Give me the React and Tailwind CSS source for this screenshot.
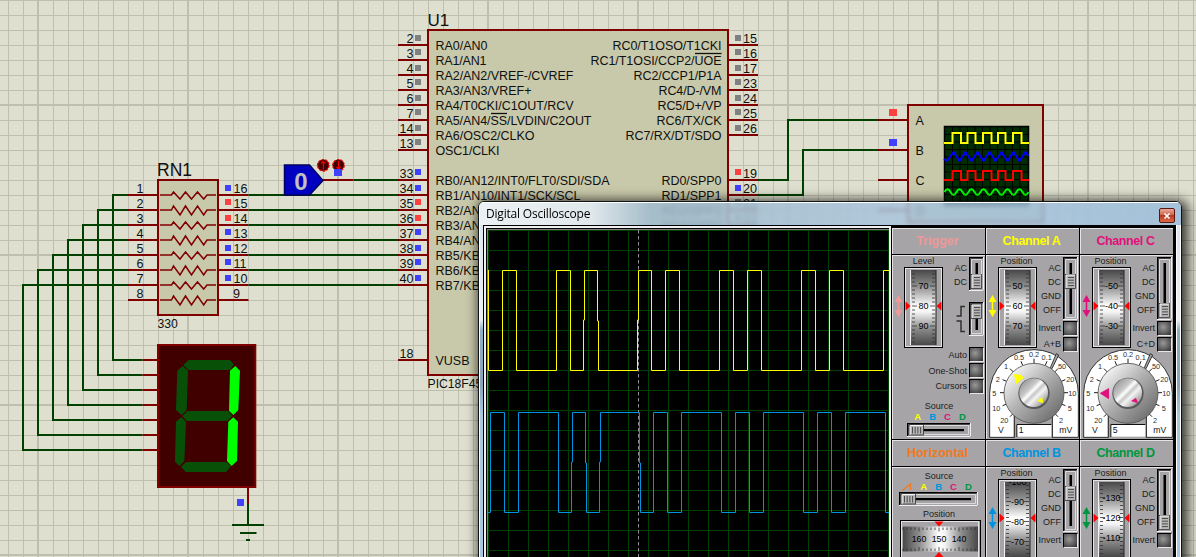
import React from "react";

const WIRE = "#004000";
const PIN = "#800000";
const SQUARE = { g: "#808080", b: "#4040ff", r: "#ff4040" };

const range = (n) => Array.from({ length: n }, (_, i) => i);

function Line({ d, color = WIRE, w = 2 }) {
  return <path d={d} stroke={color} strokeWidth={w} fill="none" />;
}

function Label({ x, y, children, size = 12.5, anchor = "start", len }) {
  return (
    <text
      x={x}
      y={y}
      fontSize={size}
      textAnchor={anchor}
      textLength={len}
      fill="#101010"
    >
      {children}
    </text>
  );
}

function SchematicGrid() {
  return (
    <g shapeRendering="crispEdges" fill="#bfbfaf">
      {range(80).map((i) => (
        <rect
          key={"v" + i}
          x={8 + 15 * i - (i % 10 === 2 ? 1 : 0)}
          y="0"
          width={i % 10 === 2 ? 2 : 1}
          height="557"
        />
      ))}
      {range(38).map((i) => (
        <rect
          key={"h" + i}
          x="0"
          y={15 * i - (i % 10 === 7 ? 1 : 0)}
          width="1196"
          height={i % 10 === 7 ? 2 : 1}
        />
      ))}
    </g>
  );
}

/* number, y, square colour, label, label width */
const LEFT_PINS = [
  ["2", 45, "g", "RA0/AN0", 52],
  ["3", 60, "g", "RA1/AN1", 51],
  ["4", 75, "g", "RA2/AN2/VREF-/CVREF", 138],
  ["5", 90, "g", "RA3/AN3/VREF+", 96],
  ["6", 105, "g", "RA4/T0CKI/C1OUT/RCV", 138],
  ["7", 120, "g", "RA5/AN4/SS/LVDIN/C2OUT", 156],
  ["14", 135, "g", "RA6/OSC2/CLKO", 99],
  ["13", 150, "g", "OSC1/CLKI", 64],
  ["33", 180, "b", "RB0/AN12/INT0/FLT0/SDI/SDA", 174],
  ["34", 195, "b", "RB1/AN10/INT1/SCK/SCL", 145],
  ["35", 210, "r", "RB2/AN"],
  ["36", 225, "r", "RB3/AN"],
  ["37", 240, "b", "RB4/AN"],
  ["38", 255, "b", "RB5/KB"],
  ["39", 270, "b", "RB6/KB"],
  ["40", 285, "b", "RB7/KB"],
  ["18", 360, null, "VUSB", 34],
];

const RIGHT_PINS = [
  ["15", 45, "g", "RC0/T1OSO/T1CKI", 109],
  ["16", 60, "g", "RC1/T1OSI/CCP2/UOE", 131],
  ["17", 75, "g", "RC2/CCP1/P1A", 88],
  ["23", 90, "g", "RC4/D-/VM", 63],
  ["24", 105, "g", "RC5/D+/VP", 64],
  ["25", 120, "g", "RC6/TX/CK", 65],
  ["26", 135, "g", "RC7/RX/DT/SDO", 96],
  ["19", 180, "r", "RD0/SPP0", 60],
  ["20", 195, "b", "RD1/SPP1", 60],
  ["21", 210, "g", "RD2/SPP2", 60],
  ["22", 225, "g", "RD3/SPP3", 60],
];

const squareY = (y) => y - ((y / 15) % 2 ? 10 : 11);

function Chip() {
  return (
    <g>
      <rect x="428" y="30" width="300" height="345" fill="#c8c8aa" stroke={PIN} strokeWidth="2" />
      <Label x={427.5} y={26} size={17}>U1</Label>
      <Label x={427.5} y={388} size={12.2}>PIC18F4550</Label>
      {LEFT_PINS.map(([n, y, sq, label, len]) => (
        <g key={n}>
          <Line d={`M398 ${y}H428`} color={PIN} />
          <Label x={413.5} y={y - 2} anchor="end" size={12.6}>{n}</Label>
          {sq && <rect x="415" y={squareY(y)} width="6" height="6" fill={SQUARE[sq]} />}
          <Label x={435.5} y={y + 5} len={len}>{label}</Label>
        </g>
      ))}
      {RIGHT_PINS.map(([n, y, sq, label, len]) => (
        <g key={n}>
          <Line d={`M728 ${y}H758`} color={PIN} />
          <Label x={743} y={y - 2} size={12.6}>{n}</Label>
          <rect x="735" y={squareY(y)} width="6" height="6" fill={SQUARE[sq]} />
          <Label x={721.5} y={y + 5} anchor="end" len={len}>{label}</Label>
        </g>
      ))}
      <Line d="M491 113.5H507" color="#101010" w={1.3} />
      <Line d="M695 53.5H721.5" color="#101010" w={1.3} />
    </g>
  );
}

const RN_COLORS = ["b", "r", "r", "b", "b", "b", "b"];

function ResistorPack() {
  return (
    <g>
      <rect x="158" y="180" width="60" height="135" fill="#c8c8aa" stroke={PIN} strokeWidth="2" />
      <Label x={157} y={176} size={17.5}>RN1</Label>
      <Label x={157.5} y={328} size={12.2}>330</Label>
      {range(8).map((i) => {
        const y = 195 + 15 * i;
        const a = i % 2 ? 4 : 3;
        return (
          <g key={i}>
            <Line d={`M128 ${y}H158M218 ${y}H248.500`} color={PIN} />
            <Line
              d={`M160 ${y}H171.500L173.500 ${y - a}L180 ${y + a + 1}L185.500 ${y - a}L191.500 ${y + a + 1}L197.500 ${y - a}L203.700 ${y + a + 1}L207 ${y}H216`}
              color={PIN}
              w={1.5}
            />
            <Label x={140} y={y - 2} anchor="middle" size={12.6}>{i + 1}</Label>
            <Label x={i === 7 ? 233 : 233.5} y={y - 2} size={12.6}>{16 - i}</Label>
            {i < 7 && (
              <>
                <rect x="225" y={squareY(y)} width="6" height="6" fill={SQUARE[RN_COLORS[i]]} />
                <Line d={`M128 ${y}H${113 - 15 * i}V${360 + 15 * i}H142.500`} />
                <Line d={`M142.500 ${360 + 15 * i}H158`} color={PIN} />
                <Line d={`M248.500 ${y}H398`} />
              </>
            )}
          </g>
        );
      })}
    </g>
  );
}

const SEGMENTS = [
  [0, "160,105 176,90 300,90 312,103 300,120 175,120"],
  [0, "158,108 174,122 170,240 155,255 138,240 142,122"],
  [0, "157,258 172,243 295,243 307,258 292,273 170,273"],
  [0, "154,262 168,275 163,393 148,408 135,395 138,275"],
  [0, "153,410 168,396 290,396 303,409 288,426 167,426"],
  [1, "316,108 330,122 325,240 310,255 297,242 300,122"],
  [1, "310,262 324,275 321,393 305,408 291,393 295,275"],
];

function SevenSegment() {
  return (
    <g>
      <rect x="158" y="345" width="97.300" height="142" fill="#400000" stroke={PIN} strokeWidth="2" />
      <g transform="translate(130 330) scale(0.3333)">
        {SEGMENTS.map(([on, p]) => (
          <polygon key={p} points={p} fill={on ? "#00ff00" : "#085008"} />
        ))}
      </g>
      <Line d="M248 488V504" color={PIN} />
      <Line d="M248 504V525M232 525H264M240 533H256.500M246 540H250" />
      <rect x="237" y="499" width="7" height="7" fill={SQUARE.b} />
    </g>
  );
}

function LogicState() {
  return (
    <g>
      <Line d="M323 180H353.500" color={PIN} />
      <Line d="M353.500 180H398" />
      <polygon points="284.500,165 309.500,165 323,180.500 309.500,195 284.500,195" fill="#0000c0" stroke="#000060" strokeWidth="1.5" />
      <text x="301" y="190" fontSize="24" fontWeight="bold" textAnchor="middle" fill="#c0c0c0">0</text>
      {[323.3, 338.5].map((x, i) => (
        <g key={x}>
          <circle cx={x} cy="165.300" r="5.700" fill="#400000" stroke="#e00000" strokeWidth="1.300" strokeDasharray="2.500 1" />
          <path
            d={i ? `M${x} 161V169M${x - 2} 167L${x} 169L${x + 2} 167` : `M${x} 169.500V162.500M${x - 2.2} 163.500L${x} 161.500L${x + 2.2} 163.500`}
            stroke="#ff0000"
            strokeWidth="1.100"
            fill="none"
          />
        </g>
      ))}
      <rect x="334" y="169" width="8" height="7" fill={SQUARE.b} />
    </g>
  );
}

const squareWave = (hi, lo) =>
  `M944 ${lo}H952.500V${hi}H961V${lo}H967.500V${hi}H975.500V${lo}H983V${hi}H991.500V${lo}H998V${hi}H1005.500V${lo}H1013V${hi}H1021.500V${lo}H1029`;

function ScopeSymbol() {
  return (
    <g>
      <Line d="M758 180H788V120H878M758 195H803V150H878" />
      <Line d="M878 120H908M878 150H908M878 180H908M878 210H908" color={PIN} />
      <rect x="889" y="109" width="8" height="7" fill={SQUARE.r} />
      <rect x="889" y="139" width="8" height="7" fill={SQUARE.b} />
      <rect x="908" y="105" width="135" height="117" fill="#c8c8aa" stroke={PIN} strokeWidth="2" />
      {["A", "B", "C", "D"].map((c, i) => (
        <Label key={c} x={915.5} y={125 + 30 * i} size={12.5}>{c}</Label>
      ))}
      <rect x="944.500" y="126.500" width="84" height="79" fill="#002c00" stroke="#000" strokeWidth="1.500" />
      <path
        d={range(10).map((i) => `M${952.5 + 7.5 * i} 127V205`).join("") + range(10).map((i) => `M945 ${134.5 + 7.5 * i}H1028`).join("")}
        stroke="#000"
        strokeWidth="1"
      />
      <g fill="none" strokeWidth="2">
        <path d={squareWave(133, 143)} stroke="#ffff00" />
        <path
          d={"M944 159L947 161" + range(7).map((i) => `L${953.5 + 12 * i} 152${i < 6 ? `L${959.5 + 12 * i} 161` : ""}`).join("") + "L1028.500 156"}
          stroke="#0000ff"
        />
        <path d={squareWave(171, 180)} stroke="#ff0000" />
        <path
          d={"M944.500 192" + range(7).map(() => `q3 -5.500 6 0q3 6 6 0`).join("")}
          stroke="#00ff00"
        />
      </g>
    </g>
  );
}

function Schematic() {
  return (
    <svg width="1196" height="557" className="block" fontFamily="'Liberation Sans', Arial, sans-serif">
      <rect width="1196" height="557" fill="#dfdfcf" />
      <SchematicGrid />
      <ResistorPack />
      <SevenSegment />
      <Chip />
      <LogicState />
      <ScopeSymbol />
    </svg>
  );
}

/* ---------- oscilloscope window ---------- */

function Traces() {
  const yellow =
    "M488.500 270V370.500H502.500V270.500H516.500V370.500H556.500V270.500H570.500V370.500H583.500V320H584.500V270.500H597.500V321H598.500V370.500H637.500V320H638.500V270.500H651.500V370.500H665.500V270.500H679.500V370.500H719.500V270.500H733.500V370.500H747.500V270.500H761.500V370.500H801.500V270.500H815.500V370.500H829.500V270.500H843.500V370.500H883.500V270.500H889";
  const blue =
    "M488 512.500H490.500V412.500H504.500V512.500H518.500V412.500H558.500V512.500H571.500V462H572.500V412.500H585.500V463H586.500V512.500H599.500V462H600.500V412.500H639.500V463H640.500V512.500H653.500V412.500H667.500V512.500H681.500V412.500H721.500V512.500H735.500V412.500H749.500V512.500H763.500V412.500H803.500V512.500H817.500V412.500H831.500V512.500H845.500V412.500H885.500V512.500H889";
  return (
    <svg width="401" height="327" viewBox="488 230 401 327" className="block bg-black" fill="none">
      <path
        d={range(21).map((i) => `M${488.5 + 20 * i} 230V557`).join("") + range(17).map((i) => `M488 ${230.5 + 20 * i}H889`).join("")}
        stroke="#004000"
      />
      <path d="M638.500 230V557" stroke="#909090" strokeDasharray="3.500 2.500" />
      <path d={blue} stroke="#0094e0" />
      <path d={yellow} stroke="#ffff00" />
    </svg>
  );
}

function Bevel({ w, h, children }) {
  return (
    <svg width={w} height={h} className="block shrink-0">
      <rect x="0.500" y="0.500" width={w - 1} height={h - 1} fill="#a6a4a6" stroke="#000" />
      <path d={`M1.500 ${h - 1.5}V1.500H${w - 1.5}`} stroke="#000" fill="none" strokeWidth="0.600" />
      <path d={`M2.500 2.500H${w - 2.5}V${h - 2.5}H2.500Z`} stroke="#dcdcdc" fill="none" />
      <path d={`M0 ${h - 0.5}H${w - 0.5}V0`} stroke="#f0f0f0" fill="none" />
      {children}
    </svg>
  );
}

function VSwitch({ h, at }) {
  return (
    <Bevel w={15} h={h}>
      <rect x="6.500" y="6" width="2.500" height={h - 12} fill="#000" />
      <rect x="2.500" y={at + 0.5} width="10" height="14" fill="#b8b8b8" stroke="#303030" strokeWidth="0.800" />
      <path d={`M3 ${at + 14}V${at + 1}H12`} stroke="#f4f4f4" fill="none" />
      {range(4).map((i) => (
        <path key={i} d={`M5 ${at + 3.5 + 2.7 * i}H11`} stroke="#404040" strokeWidth="0.900" />
      ))}
    </Bevel>
  );
}

function HSwitch({ w }) {
  return (
    <Bevel w={w} h={14}>
      <rect x="16" y="6" width={w - 23} height="2.200" fill="#000" />
      <rect x="2.500" y="2" width="14" height="10" fill="#b8b8b8" stroke="#303030" strokeWidth="0.800" />
      <path d="M3 12V2.500H16" stroke="#f4f4f4" fill="none" />
      {range(4).map((i) => (
        <path key={i} d={`M${5.5 + 2.7 * i} 4V10.500`} stroke="#404040" strokeWidth="0.900" />
      ))}
    </Bevel>
  );
}

function PushButton() {
  return (
    <div className="h-[15px] w-[15px] border border-t-black border-l-black border-r-[#e8e8e8] border-b-[#e8e8e8] bg-[radial-gradient(circle_at_40%_40%,#989898,#646464_50%,#2c2c2c)]" />
  );
}

function VDial({ values, offset = 0 }) {
  return (
    <svg width="39" height="81" className="block">
      <defs>
        <linearGradient id="drum-v" x1="0" x2="0" y1="0" y2="1">
          <stop offset="0" stopColor="#484848" />
          <stop offset="0.220" stopColor="#909090" />
          <stop offset="0.480" stopColor="#ffffff" />
          <stop offset="0.560" stopColor="#f4f4f4" />
          <stop offset="0.780" stopColor="#8c8c8c" />
          <stop offset="1" stopColor="#484848" />
        </linearGradient>
        <clipPath id="drum-clip">
          <rect x="7" y="3" width="25" height="75" />
        </clipPath>
      </defs>
      <rect x="0.500" y="0.500" width="38" height="80" fill="#a6a4a6" stroke="#000" />
      <rect x="1.500" y="1.500" width="36" height="78" fill="none" stroke="#e4e4e4" />
      <rect x="7" y="3" width="25" height="75" fill="url(#drum-v)" />
      <rect x="6" y="3" width="1" height="75" fill="#f0f0f0" />
      <rect x="31.500" y="3" width="1" height="75" fill="#202020" />
      <g clipPath="url(#drum-clip)" fontSize="9" fontFamily="'Liberation Sans', Arial, sans-serif">
        {range(21).map((i) => {
          const major = i % 5 === 0;
          const y = -0.5 + offset + 4 * i;
          const n = major ? 5 : 3;
          return <path key={i} d={`M8 ${y}h${n}M31 ${y}h-${n}`} stroke="#303030" strokeWidth="0.800" />;
        })}
        {range(5).map((i) => (
          <path key={i} d={`M8 ${offset - 4.5 - 4 * i}h3M31 ${offset - 4.5 - 4 * i}h-3`} stroke="#303030" strokeWidth="0.800" />
        ))}
        {values.map((v, i) => (
          <text key={v} x="19.500" y={2.8 + offset + 20 * i} textAnchor="middle" fill="#000">
            {v}
          </text>
        ))}
      </g>
      <polygon points="1.500,34.500 6.500,39 1.500,43.500" fill="#f00" />
      <polygon points="37.500,34.500 32.500,39 37.500,43.500" fill="#f00" />
    </svg>
  );
}

function UpDown({ color }) {
  return (
    <svg width="11" height="22" viewBox="0 0 11 22" className="mt-[39px] block shrink-0">
      <path d="M5.500 0L9.500 7H6.300V15H9.500L5.500 22L1.500 15H4.700V7H1.500Z" fill={color} />
    </svg>
  );
}

function Header({ color, children, tight }) {
  return (
    <div
      className={
        "flex h-[26px] items-center justify-center border-t border-l border-[#e4e4e4] bg-[#a6a4a6] pr-[3px] text-[12.5px] font-bold whitespace-nowrap " +
        (tight ? "tracking-[-0.4px]" : "")
      }
      style={{ color }}
    >
      {children}
    </div>
  );
}

function Body({ children, h = 184 }) {
  return (
    <div
      className="overflow-hidden border-t border-l border-[#e4e4e4] bg-[#a6a4a6] text-[9px] leading-[11px] text-[#202020]"
      style={{ height: h }}
    >
      {children}
    </div>
  );
}

const TICKS = [
  ["20", 61, 238, 225],
  ["10", 37, 202, 202.5],
  ["5", 31, 158, 180],
  ["2", 41, 116, 157.5],
  ["1", 66, 77, 135],
  ["0.5", 105, 49, 112.5],
  ["0.2", 150, 41, 90],
  ["0.1", 188, 49, 67.5],
  ["50", 234, 77, 45],
  ["20", 259, 115, 22.5],
  ["10", 265, 158, 0],
  ["5", 257, 202, -22.5],
  ["2", 231, 238, -45],
];

function Knob({ color, value, pointer, dot }) {
  return (
    <svg width="92" height="89" viewBox="9 24 276 267" className="-mt-[4px] block" fontFamily="'Liberation Sans', Arial, sans-serif">
      <defs>
        <linearGradient id="knob-outer" x1="0" y1="0" x2="1" y2="1">
          <stop offset="0.150" stopColor="#f0f0f0" />
          <stop offset="0.450" stopColor="#b4b4b4" />
          <stop offset="0.900" stopColor="#6c6c6c" />
        </linearGradient>
        <linearGradient id="knob-inner" x1="0" y1="0" x2="1" y2="1">
          <stop offset="0.150" stopColor="#a0a0a0" />
          <stop offset="0.360" stopColor="#c8c8c8" />
          <stop offset="0.450" stopColor="#ffffff" />
          <stop offset="0.530" stopColor="#c8c8c8" />
          <stop offset="0.620" stopColor="#f4f4f4" />
          <stop offset="0.850" stopColor="#a0a0a0" />
        </linearGradient>
      </defs>
      <path
        d="M17 289V157A133 131 0 0 1 283 157V289H205V220H91V289Z"
        fill="#fff"
        stroke="#303030"
        strokeWidth="3"
      />
      <rect x="92.500" y="220" width="111" height="71" fill="#a6a4a6" />
      <path d="M91 218V290M205 218V290" stroke="#303030" strokeWidth="2.500" />
      <path d="M199 80L217 38L224 42L204 83Z" fill="#a6a4a6" stroke="#202020" strokeWidth="2.500" />
      {TICKS.map(([t, x, y, a]) => {
        const c = Math.cos((a * Math.PI) / 180);
        const s = -Math.sin((a * Math.PI) / 180);
        return (
          <g key={a}>
            <path
              d={`M${150 + 88 * c} ${155 + 88 * s}L${150 + 102 * c} ${155 + 102 * s}`}
              stroke="#202020"
              strokeWidth="3"
            />
            <text x={x} y={y + 8} fontSize="22" textAnchor="middle" fill="#303030">{t}</text>
          </g>
        );
      })}
      <circle cx="150" cy="157" r="90" fill="url(#knob-outer)" stroke="#505050" strokeWidth="2.500" />
      <circle cx="150" cy="157" r="47" fill="#585858" />
      <circle cx="149" cy="155" r="43" fill="url(#knob-inner)" />
      <polygon points={pointer} fill={color} />
      <polygon points={dot} fill={color} />
      <text x="51" y="276" fontSize="26" textAnchor="middle" fill="#202020">V</text>
      <text x="245" y="276" fontSize="26" textAnchor="middle" fill="#202020">mV</text>
      <rect x="98" y="250" width="104" height="37" fill="#fff" />
      <path d="M98.500 288V250.500H202" stroke="#101010" strokeWidth="3" fill="none" />
      <text x="104" y="276" fontSize="26" fill="#101030">{value}</text>
    </svg>
  );
}

function Channel({ name, color, values, offset, coupling, sum, knob, h }) {
  return (
    <>
      <Header color={color} tight>Channel {name}</Header>
      <Body h={h}>
        <div className="flex h-[97px]">
          <UpDown color={color} />
          <div className="w-[39px] shrink-0">
            <div className="-ml-[2px] text-center">Position</div>
            <VDial values={values} offset={offset} />
          </div>
          <div className="w-[24px] shrink-0 pt-[5px] text-right leading-[14px]">
            <div>AC</div>
            <div>DC</div>
            <div>GND</div>
            <div>OFF</div>
            <div className="mt-[3px] flex h-[16px] items-center justify-end">Invert</div>
            <div className="flex h-[16px] items-center justify-end">{sum}</div>
          </div>
          <div className="ml-[2px] flex shrink-0 flex-col gap-[1px] pt-[1px]">
            <VSwitch h={63} at={coupling === "DC" ? 17 : 46} />
            <PushButton />
            {sum && <PushButton />}
          </div>
        </div>
        {knob && <Knob color={color} {...knob} />}
      </Body>
    </>
  );
}

function SourceLetters({ ramp }) {
  return (
    <div className="flex justify-center gap-[8px] text-[9.5px] leading-[10px] font-bold">
      {ramp && (
        <svg width="10" height="8" className="mt-px block">
          <path d="M0.500 7.500L8.500 1V7" stroke="#f07820" strokeWidth="1.200" fill="none" />
        </svg>
      )}
      <span className="text-[#ffff00]">A</span>
      <span className="text-[#0094e0]">B</span>
      <span className="text-[#e0107c]">C</span>
      <span className="text-[#009640]">D</span>
    </div>
  );
}

function Trigger() {
  return (
    <>
      <Header color="#f09898">Trigger</Header>
      <Body>
        <div className="flex h-[144px]">
          <UpDown color="#f09898" />
          <div className="w-[39px] shrink-0">
            <div className="text-center">Level</div>
            <VDial values={["70", "80", "90"]} offset={19.5} />
          </div>
          <div className="flex w-[24px] shrink-0 flex-col items-end pt-[5px] text-right leading-[14px]">
            <div>AC</div>
            <div>DC</div>
            <svg width="10" height="30" className="mt-[15px] mr-[1px] block" fill="none" stroke="#303030" strokeWidth="1.500">
              <path d="M0.500 12H5V2.500H9M0.500 17H5V27.500H9" />
            </svg>
            <div className="mt-[13px] flex h-[16px] items-center">Auto</div>
            <div className="flex h-[15px] items-center whitespace-nowrap">One-Shot</div>
            <div className="flex h-[16px] items-center">Cursors</div>
          </div>
          <div className="ml-[2px] flex shrink-0 flex-col pt-[1px]">
            <VSwitch h={34} at={17} />
            <div className="mt-[11px] mb-[11px]">
              <VSwitch h={34} at={2} />
            </div>
            <div className="flex flex-col gap-[1px]">
              <PushButton />
              <PushButton />
              <PushButton />
            </div>
          </div>
        </div>
        <div className="flex flex-col items-center pt-[1px]">
          <div>Source</div>
          <div className="mr-[-2px]"><SourceLetters /></div>
          <div className="mt-px"><HSwitch w={64} /></div>
        </div>
      </Body>
    </>
  );
}

function HDial() {
  return (
    <svg width="81" height="40" className="block" fontFamily="'Liberation Sans', Arial, sans-serif">
      <defs>
        <linearGradient id="drum-h">
          <stop offset="0" stopColor="#484848" />
          <stop offset="0.220" stopColor="#909090" />
          <stop offset="0.480" stopColor="#ffffff" />
          <stop offset="0.560" stopColor="#f4f4f4" />
          <stop offset="0.780" stopColor="#8c8c8c" />
          <stop offset="1" stopColor="#484848" />
        </linearGradient>
      </defs>
      <rect x="0.500" y="0.500" width="80" height="39" fill="#a6a4a6" stroke="#000" />
      <rect x="1.500" y="1.500" width="77" height="39" fill="none" stroke="#e4e4e4" />
      <rect x="3" y="6.500" width="75" height="25" fill="url(#drum-h)" />
      {range(19).map((i) => {
        const n = i % 5 === 4 ? 4 : 2.5;
        return <path key={i} d={`M${3 + 4 * i} 7.500v${n}M${3 + 4 * i} 31v-${n}`} stroke="#303030" strokeWidth="0.800" />;
      })}
      {[160, 150, 140].map((v, i) => (
        <text key={v} x={19 + 20 * i} y="22" fontSize="8.800" textAnchor="middle">{v}</text>
      ))}
      <polygon points="34.500,1.500 43.500,1.500 39,6.500" fill="#f00" />
      <polygon points="34.500,37 43.500,37 39,32" fill="#f00" />
    </svg>
  );
}

function Horizontal() {
  return (
    <>
      <Header color="#f07820">Horizontal</Header>
      <Body h={92}>
        <div className="flex flex-col items-center pt-[3px]">
          <div>Source</div>
          <div className="ml-[-4px]"><SourceLetters ramp /></div>
          <div className="mr-[1px]"><HSwitch w={79} /></div>
          <div className="mt-[3px]">Position</div>
          <div className="ml-[2px]"><HDial /></div>
        </div>
      </Body>
    </>
  );
}

function Controls() {
  return (
    <div className="grid grid-cols-[93px_93px_93px] content-start gap-[1px] bg-black pt-[2px] pr-[3px] pl-[1px]">
      <div className="flex flex-col gap-[1px]">
        <Trigger />
        <Horizontal />
      </div>
      <div className="flex flex-col gap-[1px]">
        <Channel
          name="A"
          color="#ffff00"
          values={["50", "60", "70"]}
          offset={19.5}
          coupling="DC"
          sum="A+B"
          knob={{ value: "1", pointer: "89,99 112,102 119,110 97,129", dot: "175,169 178,187 159,179" }}
        />
        <Channel name="B" color="#0094e0" values={["-100", "-90", "-80", "-70"]} offset={3} coupling="DC" sum="" h={92} />
      </div>
      <div className="flex flex-col gap-[1px]">
        <Channel
          name="C"
          color="#e0107c"
          values={["-50", "-40", "-30"]}
          offset={19.5}
          coupling="OFF"
          sum="C+D"
          knob={{ value: "5", pointer: "65,157 93,141 93,175", dot: "159,180 174,170 180,187" }}
        />
        <Channel name="D" color="#009640" values={["-130", "-120", "-110"]} offset={19} coupling="OFF" sum="" h={92} />
      </div>
    </div>
  );
}

function OscilloscopeWindow() {
  return (
    <div className="absolute top-[201px] left-[478px] h-[380px] w-[704px] rounded-t-[6px] shadow-[3px_2px_12px_3px_rgba(0,0,0,0.75)]">
      <div className="flex h-full flex-col overflow-hidden rounded-t-[6px] border border-[#101418] backdrop-blur-[2px]">
        <div className="flex h-[23px] shrink-0 items-center justify-between border-t border-l border-white bg-[linear-gradient(90deg,rgba(236,242,246,0.96)_0px,rgba(226,234,240,0.94)_110px,rgba(160,188,206,0.86)_170px,rgba(164,194,220,0.8)_420px,rgba(156,190,220,0.86)_690px)] pr-[6px] pl-[6px]">
          <span className="font-['Open_Sans','Noto_Sans',sans-serif] text-[12px] tracking-[-0.2px] text-black">
            Digital Oscilloscope
          </span>
          <span className="mt-[3px] flex h-[15px] w-[16px] items-center justify-center rounded-[2px] border border-[#5c1810] bg-[linear-gradient(180deg,#e8a898,#d06850_45%,#b83820_50%,#d86c48)]">
            <svg width="8" height="8" viewBox="0 0 8 8">
              <path d="M1.500 1.500L6.500 6.500M6.500 1.500L1.500 6.500" stroke="#fff" strokeWidth="1.600" />
            </svg>
          </span>
        </div>
        <div className="flex min-h-0 flex-1 border-l border-white bg-[linear-gradient(180deg,#dce6ee,#e8f0f4_95px,#8cb0c4_105px,#88a4b8_160px,#a8c8e0_190px)] pl-[3px] font-['Liberation_Sans',Arial,sans-serif]">
          <div className="flex border-t border-l border-black bg-black">
            <div className="border-[2px] border-[#f0f0f0]">
              <div className="border-t border-l border-black">
                <div className="border-t border-l border-[#808080]">
                  <Traces />
                </div>
              </div>
            </div>
            <Controls />
          </div>
          <div className="w-px bg-white" />
          <div className="flex-1" />
          <div className="w-px bg-white" />
        </div>
      </div>
    </div>
  );
}

export default function App() {
  return (
    <div className="relative h-[557px] w-[1196px] overflow-hidden bg-[#dfdfcf]">
      <Schematic />
      <OscilloscopeWindow />
    </div>
  );
}
